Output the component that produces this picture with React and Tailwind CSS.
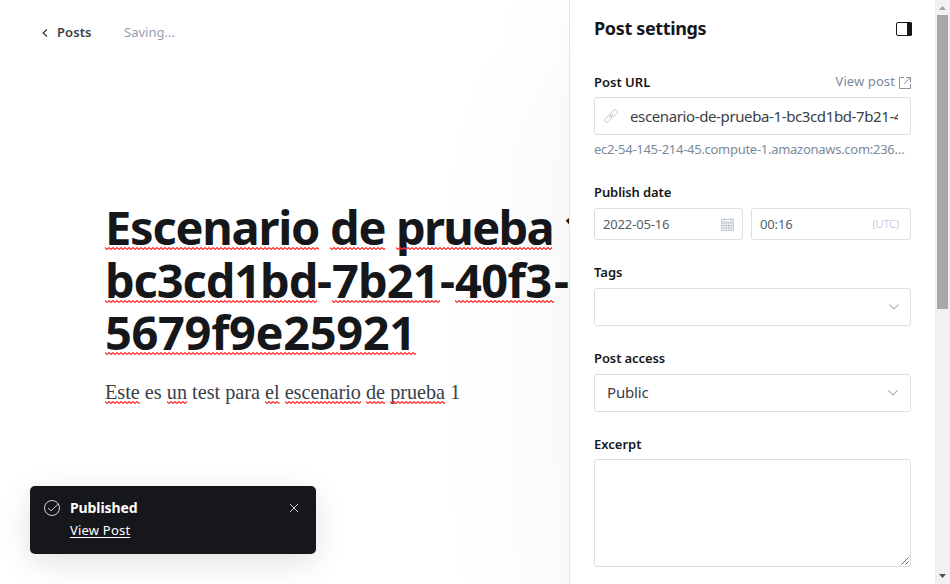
import React from "react";

function Wavy() {
  return (
    <svg className="absolute left-0 bottom-0 w-full h-[3px]" aria-hidden="true">
      <defs>
        <pattern id="wave" width="4" height="3" patternUnits="userSpaceOnUse">
          <path d="M-2 2.5 L0 0.6 L2 2.4 L4 0.6 L6 2.5" fill="none" stroke="#ff2a2a" strokeWidth="1.2" />
        </pattern>
      </defs>
      <rect width="100%" height="3" fill="url(#wave)" />
    </svg>
  );
}

function Word({ className, children, marked = true }) {
  return (
    <span className={"relative block shrink-0 whitespace-pre " + className}>
      {children}
      {marked && <Wavy />}
    </span>
  );
}

function Label({ className = "", children }) {
  return <div className={"flex items-center text-[13px] font-semibold text-[#15171a] " + className}>{children}</div>;
}

function Chevron() {
  return (
    <svg className="w-[10px] h-[6px]" viewBox="0 0 10 6" fill="none" stroke="#aeb7c1" strokeWidth="1.1">
      <path d="M0.5 0.5 L5 5 L9.5 0.5" />
    </svg>
  );
}

function Editor() {
  return (
    <main className="w-[569px] h-full shrink-0 overflow-hidden flex flex-col">
      <nav className="h-[65px] shrink-0 pl-[42px] flex items-center text-[13px]">
        <svg className="w-[6px] h-[8px]" viewBox="0 0 6 8" fill="none" stroke="#394047" strokeWidth="1.3">
          <path d="M5 0.5 L1.2 4 L5 7.5" />
        </svg>
        <span className="ml-[9px] w-[67px] font-semibold text-[#394047] tracking-[0.1px]">Posts</span>
        <span className="text-[#95a1ad]">Saving...</span>
      </nav>
      <div className="mt-[137px] pl-[105px]">
        <h1 className="text-[47px] leading-[50px] font-bold text-[#15171a]">
          <div className="flex h-[53px]">
            <Word className="w-[214px] mr-[11px] h-[48px] tracking-[-1.25px]">Escenario</Word>
            <Word className="w-[55px] mr-[11px] h-[48px] tracking-[-1.3px]">de</Word>
            <Word className="w-[156px] mr-[11px] h-[48px] tracking-[-1.7px]">prueba</Word>
            <Word marked={false} className="h-[48px]">1</Word>
          </div>
          <div className="flex h-[52px]">
            <Word className="w-[212px] h-[48px] tracking-[-1.1px]">bc3cd1bd</Word>
            <Word marked={false} className="w-[15px] h-[48px]">-</Word>
            <Word className="w-[108px] h-[48px] tracking-[-0.9px]">7b21</Word>
            <Word marked={false} className="w-[15px] h-[48px]">-</Word>
            <Word className="w-[99px] h-[48px] tracking-[-0.6px]">40f3</Word>
            <Word marked={false} className="w-[15px] h-[48px]">-</Word>
          </div>
          <div className="flex h-[53px]">
            <Word className="w-[311px] h-[48px] tracking-[-0.35px]">5679f9e25921</Word>
          </div>
        </h1>
        <p className="mt-[20px] flex gap-[5.1px] font-['Liberation_Serif',serif] text-[20.2px] leading-[25px] text-[#394047]">
          <Word className="h-[24px]">Este</Word>
          <Word marked={false} className="h-[24px]">es</Word>
          <Word className="h-[24px]">un</Word>
          <Word marked={false} className="h-[24px]">test para</Word>
          <Word className="h-[24px]">el</Word>
          <Word className="h-[24px]">escenario</Word>
          <Word className="h-[24px]">de</Word>
          <Word className="h-[24px]">prueba</Word>
          <Word marked={false} className="h-[24px]">1</Word>
        </p>
      </div>
    </main>
  );
}

function Settings() {
  return (
    <aside className="relative w-[366px] h-full shrink-0 border-l border-[#e5e7e9] bg-white pl-[24px] pr-[24px] shadow-[0_60px_180px_rgba(0,0,0,0.05),0_20px_30px_rgba(0,0,0,0.015)]">
      <header className="h-[58px] flex items-center justify-between">
        <h2 className="-mt-[2px] text-[18px] font-bold text-[#15171a] tracking-[-0.35px]">Post settings</h2>
        <svg className="w-[16px] h-[14px] mr-[-1px]" viewBox="0 0 16 14">
          <rect x="0.5" y="0.5" width="15" height="13" rx="1.5" fill="none" stroke="#15171a" />
          <rect x="11" y="0.5" width="5" height="13" fill="#15171a" />
        </svg>
      </header>
      <div className="mt-[10px] h-[29px] flex items-center justify-between">
        <Label>Post URL</Label>
        <div className="flex items-center gap-[4px] text-[13px] text-[#7c8b9a]">
          <span className="-mt-[2px] tracking-[0.1px]">View post</span>
          <svg className="w-[12px] h-[12px]" viewBox="0 0 12 12" fill="none" stroke="#8896a3">
            <path d="M5 0.5 H0.5 V11.5 H11.5 V7 M7 0.5 H11.5 V5 M11.5 0.5 L5 7" />
          </svg>
        </div>
      </div>
      <div className="h-[38px] border border-[#dddfe2] rounded-[3px] flex items-center pl-[9px] pr-[11px]">
        <svg className="w-[14px] h-[14px] shrink-0" viewBox="0 0 14 14" fill="none" stroke="#b9bfc6" strokeWidth="0.8">
          <rect x="-3.9" y="-2.1" width="7.8" height="4.2" rx="1.9" transform="translate(4.2 9.8) rotate(-45)" />
          <rect x="-3.9" y="-2.1" width="7.8" height="4.2" rx="1.9" transform="translate(9.8 4.2) rotate(-45)" />
          <path d="M4.8 9.2 L9.2 4.8" />
        </svg>
        <div className="ml-[12px] w-[268px] overflow-hidden whitespace-nowrap text-[15px] text-[#394047] tracking-[-0.38px]">
          escenario-de-prueba-1-bc3cd1bd-7b21-40f3
        </div>
      </div>
      <div className="h-[30px] flex items-center whitespace-nowrap text-[13px] text-[#7c8b9a] tracking-[-0.28px]">
        ec2-54-145-214-45.compute-1.amazonaws.com:236…
      </div>
      <Label className="mt-[12px] h-[31px] tracking-[-0.1px]">Publish date</Label>
      <div className="flex gap-[8px] h-[32px] text-[13px] text-[#54606b]">
        <div className="w-[149px] border border-[#dddfe2] rounded-[3px] flex items-center justify-between px-[8px]">
          <span className="pt-[1px] tracking-[-0.15px]">2022-05-16</span>
          <svg className="w-[13px] h-[13px]" viewBox="0 0 13 13" fill="none" stroke="#aeb7c1" strokeWidth="0.7">
            <path d="M0.5 1.5 H12.5 V12.5 H0.5 Z M0.5 4 H12.5 M0.5 5 H12.5 M3 5 V12.5 M5.3 5 V12.5 M7.7 5 V12.5 M10 5 V12.5 M0.5 7.5 H12.5 M0.5 10 H12.5 M3 0 V3 M10 0 V3" />
          </svg>
        </div>
        <div className="flex-1 border border-[#dddfe2] rounded-[3px] flex items-center justify-between pl-[8px] pr-[11px]">
          <span className="pt-[1px] tracking-[-0.15px]">00:16</span>
          <span className="text-[11px] font-light text-[#aeb7c1]">(UTC)</span>
        </div>
      </div>
      <Label className="mt-[17px] h-[31px]">Tags</Label>
      <div className="h-[38px] border border-[#dddfe2] rounded-[3px] flex items-center justify-end pr-[11px]">
        <Chevron />
      </div>
      <Label className="mt-[17px] h-[31px] tracking-[-0.1px]">Post access</Label>
      <div className="h-[38px] border border-[#dddfe2] rounded-[3px] flex items-center justify-between pl-[12px] pr-[12px] text-[15px] text-[#394047]">
        <span className="-mt-[2px] tracking-[-0.15px]">Public</span>
        <Chevron />
      </div>
      <Label className="mt-[17px] h-[30px] pt-[1px]">Excerpt</Label>
      <div className="h-[108px] border border-[#dddfe2] rounded-[3px] flex items-end justify-end p-[1px]">
        <svg className="w-[8px] h-[8px]" viewBox="0 0 8 8" stroke="#55585c" strokeWidth="0.9">
          <path d="M0.5 7.5 L7.5 0.5 M4.5 7.5 L7.5 4.5" />
        </svg>
      </div>
    </aside>
  );
}

function Scrollbar() {
  return (
    <div className="relative w-[15px] h-full shrink-0 bg-[#f1f1f1] flex flex-col items-center">
      <svg className="w-[15px] h-[15px] shrink-0" viewBox="0 0 15 15">
        <path d="M4 10 L7.5 6 L11 10 Z" fill="#a3a3a3" />
      </svg>
      <div className="w-[11px] h-[294px] bg-[#a8a8a8]" />
      <svg className="mt-auto w-[15px] h-[15px] shrink-0" viewBox="0 0 15 15">
        <path d="M4 5 L7.5 9 L11 5 Z" fill="#505050" />
      </svg>
    </div>
  );
}

function Toast() {
  return (
    <div className="absolute left-[30px] top-[486px] w-[286px] h-[68px] rounded-[5px] bg-[#15171a] text-white shadow-[0_8px_30px_rgba(0,0,0,0.12)] flex pt-[12px] pl-[14px] pr-[18px]">
      <svg className="mt-[2px] w-[16px] h-[16px]" viewBox="0 0 16 16" fill="none" stroke="#e4e5e6" strokeWidth="0.9">
        <circle cx="8" cy="8" r="7.5" />
        <path d="M4 8 L7 10.8 L14.3 4" />
      </svg>
      <div className="ml-[10px] flex-1">
        <div className="h-[20px] leading-[20px] text-[14px] font-bold tracking-[-0.1px]">Published</div>
        <div className="mt-[2px] h-[20px] leading-[20px] text-[13px] underline underline-offset-2 tracking-[0.2px]">View Post</div>
      </div>
      <svg className="mt-[6px] w-[8px] h-[8px]" viewBox="0 0 8 8" stroke="#e4e5e6" strokeWidth="0.9">
        <path d="M0 0 L8 8 M8 0 L0 8" />
      </svg>
    </div>
  );
}

export default function App() {
  return (
    <div className="relative w-[950px] h-[584px] overflow-hidden bg-white flex font-['Noto_Sans',sans-serif]">
      <Editor />
      <Settings />
      <Scrollbar />
      <Toast />
    </div>
  );
}
